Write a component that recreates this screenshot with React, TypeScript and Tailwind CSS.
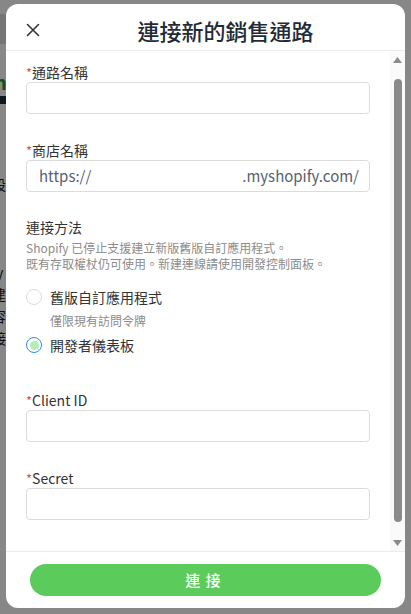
import React from "react";

function Field({ label, children }: { label: string; children?: React.ReactNode }) {
  return (
    <div className="flex flex-col">
      <label className="h-5 text-[14px] leading-5 text-[#333]">
        <span className="text-[13px] text-[#f04848]">*</span>
        {label}
      </label>
      {children ?? <div className="h-[32px] rounded-[4px] border border-[#dcdcdc]" />}
    </div>
  );
}

function Radio({ checked }: { checked?: boolean }) {
  return (
    <span
      className={
        checked
          ? "flex h-4 w-4 items-center justify-center rounded-full border border-[#2d8ce6] bg-white"
          : "flex h-4 w-4 items-center justify-center rounded-full border border-[#dcdcdc] bg-white"
      }
    >
      {checked && <span className="h-[9px] w-[9px] rounded-full bg-[#b6ecb6]" />}
    </span>
  );
}

function ScrollBar() {
  return (
    <div className="flex w-[15px] shrink-0 flex-col items-center bg-[#fafafa] pt-[6px]">
      <svg width="9" height="6" viewBox="0 0 9 6">
        <path d="M4.5 0L9 6H0Z" fill="#8a8a8a" />
      </svg>
      <div className="mt-[16px] h-[443px] w-[8px] rounded-full bg-[#8a8a8a]" />
      <svg className="mt-[18px]" width="9" height="6" viewBox="0 0 9 6">
        <path d="M0 0H9L4.5 6Z" fill="#8a8a8a" />
      </svg>
    </div>
  );
}

export default function App() {
  return (
    <div className="relative h-[614px] w-[411px] overflow-hidden bg-white font-['Noto_Sans_CJK_TC','Noto_Sans',sans-serif]">
      {/* page behind the dialog */}
      <div className="flex flex-col items-start">
        <div className="mt-[14px] -ml-[10px] h-[30px] w-[20px] rounded-md bg-[#dedede]" />
        <div className="-ml-[6px] mt-[28px] text-[20px] font-bold leading-5 text-[#1a9a3a]">n</div>
        <div className="mt-[4px] h-[8px] w-[8px] bg-[#1c2b3a]" />
        <div className="-ml-[8px] mt-[72px] text-[14px] leading-4 text-[#222]">設</div>
        <div className="-ml-[4px] mt-[72px] text-[14px] leading-4 text-[#222]">y</div>
        <div className="-ml-[8px] mt-[6px] text-[14px] leading-4 text-[#222]">建</div>
        <div className="-ml-[8px] mt-[6px] text-[14px] leading-4 text-[#222]">容</div>
        <div className="-ml-[8px] mt-[6px] text-[14px] leading-4 text-[#222]">接</div>
      </div>

      <div className="absolute inset-0 bg-black/[0.47]">
        <div className="ml-[6px] mt-[4px] flex h-[604px] w-[399px] flex-col overflow-hidden rounded-xl bg-white">
          {/* header */}
          <div className="flex h-[47px] shrink-0 items-center border-b border-[#ececec] pl-[14px] pt-[5px]">
            <button className="flex h-[26px] w-[26px] items-center justify-center">
              <svg width="14" height="14" viewBox="0 0 14 14" fill="none" stroke="#333" strokeWidth="1.6" strokeLinecap="round">
                <path d="M1.5 1.5L12.5 12.5M12.5 1.5L1.5 12.5" />
              </svg>
            </button>
            <h1 className="flex-1 text-center text-[22px] font-medium leading-7 text-[#1f2b36]">連接新的銷售通路</h1>
          </div>

          {/* body */}
          <div className="flex min-h-0 flex-1">
            <div className="flex min-w-0 flex-1 flex-col overflow-hidden px-5 pt-[11px]">
              <Field label="通路名稱" />

              <div className="mt-[26px]">
                <Field label="商店名稱">
                  <div className="flex h-[32px] items-center justify-between rounded-[4px] border border-[#dcdcdc] pl-3 pr-[10px] text-[15px] text-[#56626e]">
                    <span>https://</span>
                    <span>.myshopify.com/</span>
                  </div>
                </Field>
              </div>

              <div className="mt-[25px] text-[14px] leading-5 text-[#333]">連接方法</div>
              <p className="mt-[3px] text-[12px] leading-4 text-[#8c8c8c]">
                Shopify 已停止支援建立新版舊版自訂應用程式。
                <br />
                既有存取權杖仍可使用。新建連線請使用開發控制面板。
              </p>

              <div className="mt-[14px] flex h-[22px] items-center gap-2">
                <Radio />
                <span className="text-[14px] text-[#333]">舊版自訂應用程式</span>
              </div>
              <div className="mt-[5px] pl-6 text-[12px] leading-4 text-[#8c8c8c]">僅限現有訪問令牌</div>
              <div className="mt-[5px] flex h-[22px] items-center gap-2">
                <Radio checked />
                <span className="text-[14px] text-[#333]">開發者儀表板</span>
              </div>

              <div className="mt-[34px]">
                <Field label="Client ID" />
              </div>
              <div className="mt-[26px]">
                <Field label="Secret" />
              </div>
            </div>
            <ScrollBar />
          </div>

          {/* footer */}
          <div className="shrink-0 border-t border-[#ececec] px-6 pb-3 pt-3">
            <button className="h-[32px] w-full rounded-full bg-[#5bcc5b] text-[15px] font-medium tracking-[0.35em] text-white">
              連接
            </button>
          </div>
        </div>
      </div>
    </div>
  );
}
